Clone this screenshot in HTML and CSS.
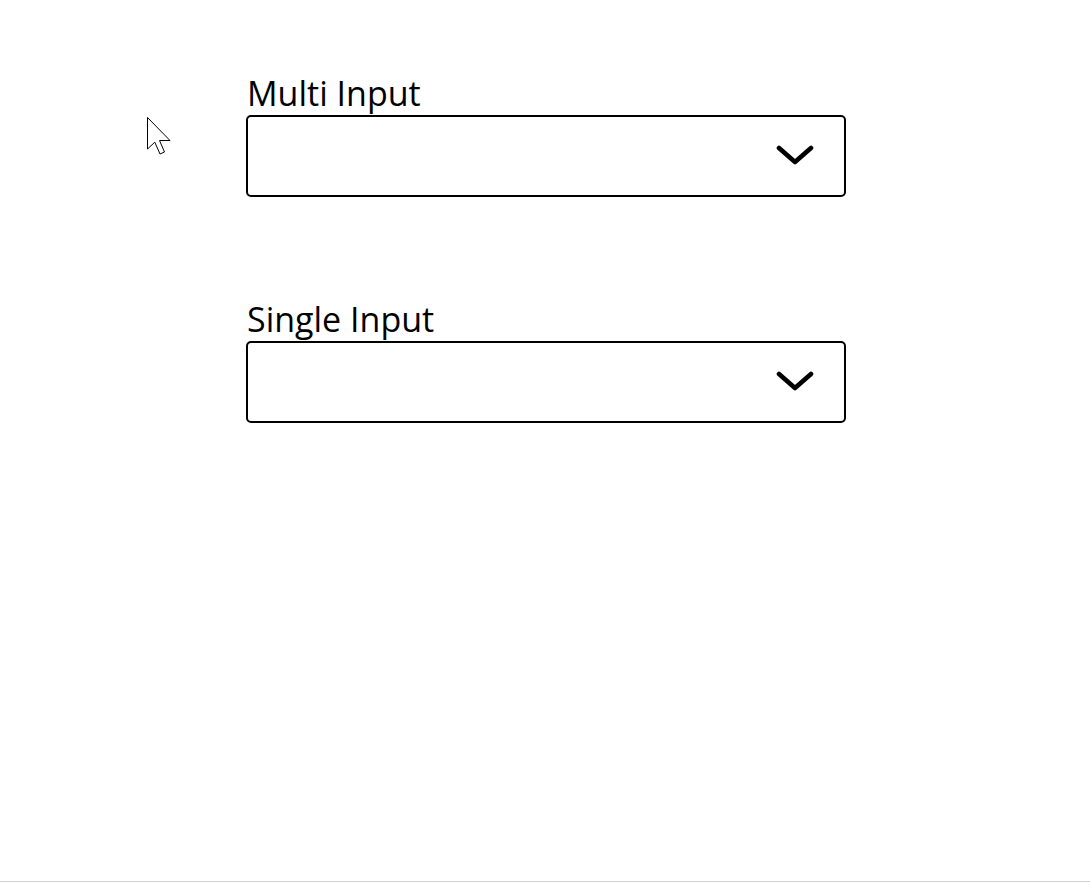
FILE: index.html
```html
<!DOCTYPE html>
<html>
<head>
<meta charset="utf-8">
<link rel="stylesheet" href="styles.css">
</head>
<body>
<div class="page">
  <div class="form">
    <div class="field">
      <label class="label">Multi Input</label>
      <div class="select">
        <svg class="chev" width="40" height="24" viewBox="0 0 40 24"><path d="M3 4 L19 18 L35 4" fill="none" stroke="#000" stroke-width="4.6" stroke-linecap="round" stroke-linejoin="round"/></svg>
      </div>
    </div>
    <div class="field">
      <label class="label">Single Input</label>
      <div class="select">
        <svg class="chev" width="40" height="24" viewBox="0 0 40 24"><path d="M3 4 L19 18 L35 4" fill="none" stroke="#000" stroke-width="4.6" stroke-linecap="round" stroke-linejoin="round"/></svg>
      </div>
    </div>
  </div>
  <svg class="cursor" width="30" height="42" viewBox="0 0 30 42"><path d="M1.5 1.5 L1.5 33 L8.8 26.2 L14 38 L18.5 36 L13.5 24.5 L24 24.5 Z" fill="#fff" stroke="#000" stroke-width="1" stroke-linejoin="miter"/></svg>
</div>
</body>
</html>
```
FILE: styles.css
```css
html, body {
  margin: 0;
  padding: 0;
  background: #fff;
}
body {
  font-family: "Open Sans", "Noto Sans", sans-serif;
  color: #000;
}
.page {
  position: relative;
  width: 1090px;
  height: 882px;
  box-sizing: border-box;
  border-bottom: 1px solid #cfcfcf;
}
.form {
  padding: 72px 0 0 246px;
  display: flex;
  flex-direction: column;
  gap: 101px;
}
.field {
  display: flex;
  flex-direction: column;
  width: 600px;
}
.label {
  font-size: 34px;
  line-height: 43px;
  padding-left: 1px;
}
.select {
  height: 82px;
  box-sizing: border-box;
  border: 2px solid #000;
  border-radius: 5px;
  display: flex;
  align-items: center;
  justify-content: flex-end;
  padding-right: 28px;
}
.chev {
  display: block;
  margin-top: 0;
}
.cursor {
  position: absolute;
  left: 146px;
  top: 116px;
}
```
